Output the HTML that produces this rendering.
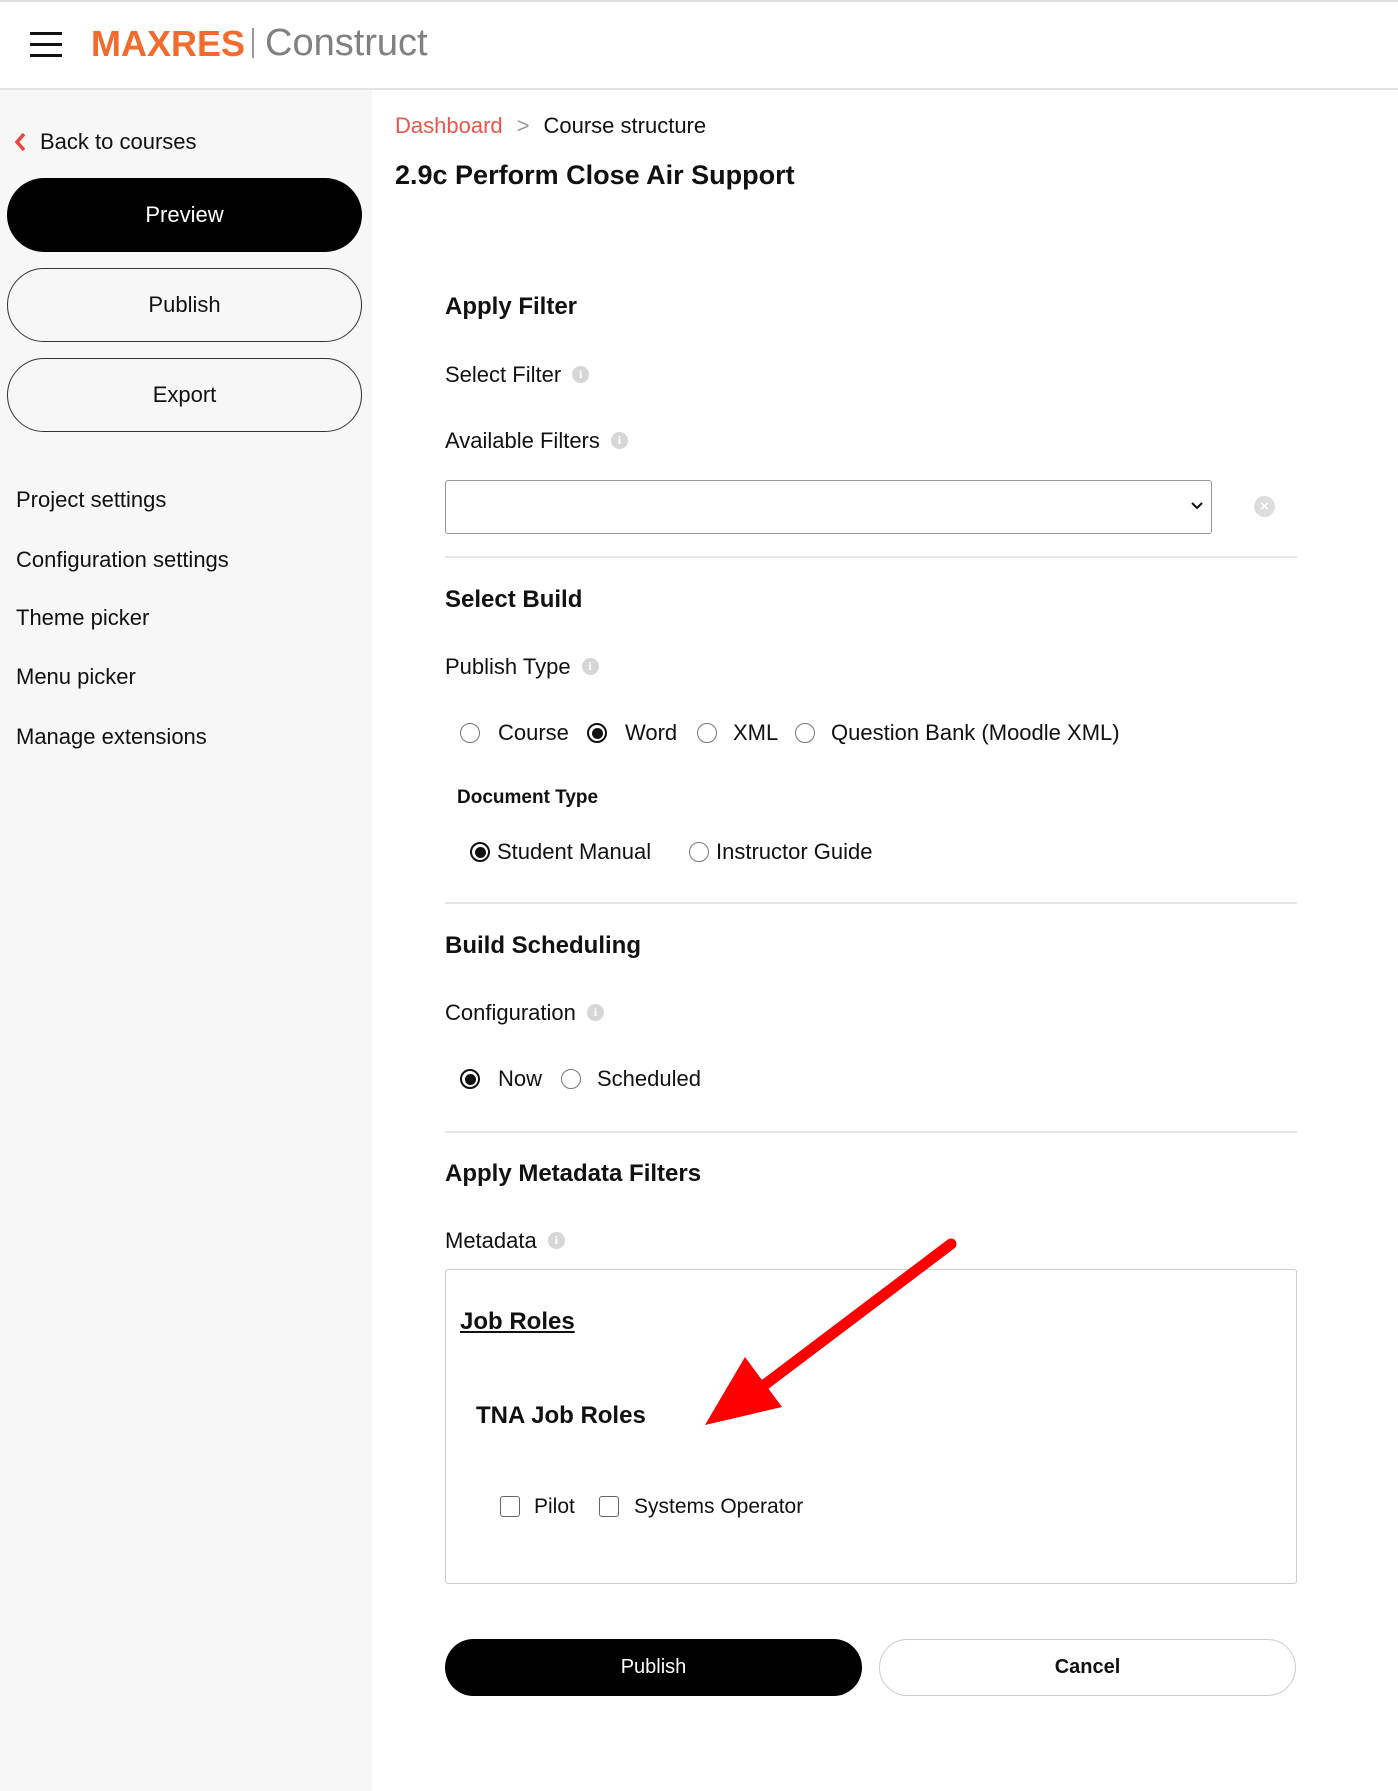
<!DOCTYPE html>
<html><head><meta charset="utf-8"><style>
*{margin:0;padding:0;box-sizing:border-box}
body{width:1398px;height:1791px;position:relative;background:#fff;font-family:"Liberation Sans",sans-serif;color:#111;overflow:hidden}
.a{position:absolute;white-space:nowrap}
.t{font-size:22px;line-height:30px;height:30px}
.h{font-size:24px;font-weight:bold;line-height:30px;height:30px}
.btn{position:absolute;border-radius:40px;display:flex;align-items:center;justify-content:center;font-size:22px}
.info{display:inline-block;width:17px;height:17px;border-radius:50%;background:#d6d6d6;color:#fff;font-size:12px;line-height:17px;text-align:center;font-weight:bold;vertical-align:middle;margin-left:11px;position:relative;top:-2px;font-family:"Liberation Serif",serif}
.r{position:absolute;width:20px;height:20px;border-radius:50%;border:1.5px solid #777;background:#fff}
.r.on::after{content:"";position:absolute;left:3px;top:3px;width:11px;height:11px;border-radius:50%;background:#111}
.r.on{border:2px solid #111}
.hr{position:absolute;left:445px;width:852px;height:2px;background:#e6e6e6}
.cb{position:absolute;width:20px;height:21px;border:1.5px solid #666;border-radius:3px;background:#fff}
</style></head><body>
<div class="a" style="left:0;top:0;width:1398px;height:2px;background:#ddd"></div>
<div class="a" style="left:0;top:88px;width:1398px;height:2px;background:#e4e4e4"></div>
<div class="a" style="left:30px;top:32px;width:32px;height:3px;background:#111"></div>
<div class="a" style="left:30px;top:43px;width:32px;height:3px;background:#111"></div>
<div class="a" style="left:30px;top:54px;width:32px;height:3px;background:#111"></div>
<div class="a" style="left:91px;top:21px;font-size:36px;line-height:46px;font-weight:bold;color:#f26a2c">MAXRES</div>
<div class="a" style="left:252px;top:28px;width:2px;height:30px;background:#999"></div>
<div class="a" style="left:265px;top:20px;font-size:38px;line-height:46px;color:#808080">Construct</div>

<div class="a" style="left:0;top:90px;width:372px;height:1701px;background:#f7f7f7"></div>
<svg class="a" style="left:13px;top:132px" width="14" height="20"><path d="M11 2 L4 10 L11 18" stroke="#e8473a" stroke-width="3.5" fill="none"/></svg>
<div class="a t" style="left:40px;top:127px">Back to courses</div>
<div class="btn" style="left:7px;top:178px;width:355px;height:74px;background:#000;color:#fff">Preview</div>
<div class="btn" style="left:7px;top:268px;width:355px;height:74px;border:1.5px solid #333;color:#111">Publish</div>
<div class="btn" style="left:7px;top:358px;width:355px;height:74px;border:1.5px solid #333;color:#111">Export</div>
<div class="a t" style="left:16px;top:485px">Project settings</div>
<div class="a t" style="left:16px;top:545px">Configuration settings</div>
<div class="a t" style="left:16px;top:603px">Theme picker</div>
<div class="a t" style="left:16px;top:662px">Menu picker</div>
<div class="a t" style="left:16px;top:722px">Manage extensions</div>

<div class="a t" style="left:395px;top:111px"><span style="color:#e8564a">Dashboard</span><span style="color:#999;margin:0 14px">&gt;</span>Course structure</div>
<div class="a" style="left:395px;top:159px;font-size:27px;font-weight:bold;line-height:32px">2.9c Perform Close Air Support</div>

<div class="a h" style="left:445px;top:292px">Apply Filter</div>
<div class="a t" style="left:445px;top:360px">Select Filter<span class="info">i</span></div>
<div class="a t" style="left:445px;top:426px">Available Filters<span class="info">i</span></div>
<div class="a" style="left:445px;top:480px;width:767px;height:54px;border:1.5px solid #999;border-radius:3px"></div>
<svg class="a" style="left:1190px;top:500px" width="14" height="12"><path d="M2 3 L7 8 L12 3" stroke="#111" stroke-width="2" fill="none"/></svg>
<div class="a" style="left:1254px;top:496px;width:21px;height:21px;border-radius:50%;background:#ddd;color:#fff;font-size:15px;font-weight:bold;line-height:21px;text-align:center">×</div>
<div class="hr" style="top:556px"></div>

<div class="a h" style="left:445px;top:585px">Select Build</div>
<div class="a t" style="left:445px;top:652px">Publish Type<span class="info">i</span></div>
<div class="r" style="left:460px;top:723px"></div><div class="a t" style="left:498px;top:718px">Course</div>
<div class="r on" style="left:587px;top:723px"></div><div class="a t" style="left:625px;top:718px">Word</div>
<div class="r" style="left:697px;top:723px"></div><div class="a t" style="left:733px;top:718px">XML</div>
<div class="r" style="left:795px;top:723px"></div><div class="a t" style="left:831px;top:718px">Question Bank (Moodle XML)</div>
<div class="a" style="left:457px;top:786px;font-size:19px;font-weight:bold;line-height:24px">Document Type</div>
<div class="r on" style="left:470px;top:842px"></div><div class="a t" style="left:497px;top:837px">Student Manual</div>
<div class="r" style="left:689px;top:842px"></div><div class="a t" style="left:716px;top:837px">Instructor Guide</div>
<div class="hr" style="top:902px"></div>

<div class="a h" style="left:445px;top:931px">Build Scheduling</div>
<div class="a t" style="left:445px;top:998px">Configuration<span class="info">i</span></div>
<div class="r on" style="left:460px;top:1069px"></div><div class="a t" style="left:498px;top:1064px">Now</div>
<div class="r" style="left:561px;top:1069px"></div><div class="a t" style="left:597px;top:1064px">Scheduled</div>
<div class="hr" style="top:1131px"></div>

<div class="a h" style="left:445px;top:1159px">Apply Metadata Filters</div>
<div class="a t" style="left:445px;top:1226px">Metadata<span class="info">i</span></div>
<div class="a" style="left:445px;top:1269px;width:852px;height:315px;border:1.5px solid #ccc;border-radius:3px"></div>
<div class="a h" style="left:460px;top:1307px;text-decoration:underline">Job Roles</div>
<div class="a h" style="left:476px;top:1401px">TNA Job Roles</div>
<div class="cb" style="left:500px;top:1496px"></div><div class="a" style="left:534px;top:1493px;font-size:21px;line-height:28px">Pilot</div>
<div class="cb" style="left:599px;top:1496px"></div><div class="a" style="left:634px;top:1493px;font-size:21px;line-height:28px">Systems Operator</div>

<svg class="a" style="left:0;top:0" width="1398" height="1791">
<line x1="951" y1="1244" x2="755" y2="1392" stroke="#f00" stroke-width="11" stroke-linecap="round"/>
<polygon points="705,1425 745,1357 782,1407" fill="#f00"/>
</svg>

<div class="btn" style="left:445px;top:1639px;width:417px;height:57px;background:#000;color:#fff;font-size:20px">Publish</div>
<div class="btn" style="left:879px;top:1639px;width:417px;height:57px;border:1.5px solid #ccc;color:#111;font-size:20px;font-weight:bold">Cancel</div>
</body></html>
